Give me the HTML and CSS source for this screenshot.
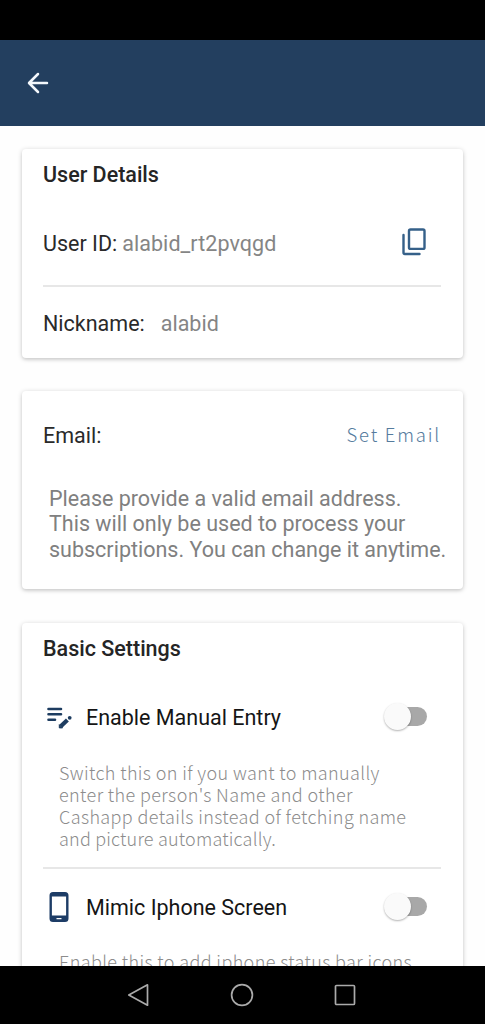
FILE: index.html
```html
<!DOCTYPE html>
<html lang="en">
<head>
<meta charset="utf-8">
<title>Settings</title>
<link rel="stylesheet" href="styles.css">
</head>
<body>
<div class="phone">
  <div class="status-bar"></div>
  <header class="app-bar">
    <svg class="back" viewBox="0 0 24 24"><path d="M21 12H3.500M12 3L3 12l9 9" fill="none" stroke="#f4f8fc" stroke-width="2.500" stroke-linecap="round" stroke-linejoin="round"/></svg>
  </header>
  <main class="content">
    <section class="card user-card">
      <h2 class="card-title">User Details</h2>
      <div class="row user-row">
        <span class="label">User ID:</span><span class="value user-id">alabid_rt2pvqgd</span>
        <svg class="copy" viewBox="0 0 26 28"><g fill="none" stroke="#356089" stroke-width="2.400" stroke-linecap="round" stroke-linejoin="round"><rect x="8" y="1.500" width="15.500" height="19.400" rx="1.500"/><path d="M2.500 7v17.500q0 1.500 1.500 1.500H18.500"/></g></svg>
      </div>
      <div class="divider"></div>
      <div class="row nick-row">
        <span class="label">Nickname:</span><span class="value nickname">alabid</span>
      </div>
    </section>
    <section class="card email-card">
      <div class="row email-row">
        <span class="label">Email:</span>
        <a class="set-email">Set Email</a>
      </div>
      <p class="email-note">Please provide a valid email address.<br>This will only be used to process your<br>subscriptions. You can change it anytime.</p>
    </section>
    <section class="card settings-card">
      <h2 class="card-title">Basic Settings</h2>
      <div class="row setting-row">
        <span class="icon-slot"><svg class="edit" viewBox="0 0 26 22"><g fill="none" stroke="#1d3c60" stroke-width="2.600" stroke-linecap="round"><path d="M2.500 2h12.500M2.500 7.200h12.500M2.500 12.700h6.500"/></g><path d="M14.800 19.200l6.600-6.300" fill="none" stroke="#1d3c60" stroke-width="4.200"/><path d="M13.300 17.700v3.200h3.200z" fill="#1d3c60" stroke="#1d3c60" stroke-width="1" stroke-linejoin="round"/><circle cx="23.700" cy="10.800" r="1.900" fill="#1d3c60"/></svg></span>
        <span class="setting-name">Enable Manual Entry</span>
        <span class="toggle"><span class="knob"></span></span>
      </div>
      <p class="help">Switch this on if you want to manually<br>enter the person's Name and other<br>Cashapp details instead of fetching name<br><span class="help-last">and picture automatically.</span></p>
      <div class="divider"></div>
      <div class="row phone-row">
        <span class="icon-slot"><svg class="device" viewBox="0 0 20 30"><path fill-rule="evenodd" d="M4 0h12q3.500 0 3.500 3.500v23q0 3.500-3.500 3.500H4Q.5 30 .5 26.500v-23Q.5 0 4 0zM2.900 4.500v19h14.200v-19zM7.500 26v1.200h5V26z" fill="#1d3c66"/></svg></span>
        <span class="setting-name">Mimic Iphone Screen</span>
        <span class="toggle"><span class="knob"></span></span>
      </div>
      <p class="help help-cut">Enable this to add iphone status bar icons</p>
    </section>
  </main>
  <nav class="nav-bar">
    <svg viewBox="0 0 24 24"><path d="M20.500 1.800v20.400L1.800 12z"/></svg>
    <svg viewBox="0 0 24 24"><circle cx="12" cy="12" r="10.400"/></svg>
    <svg viewBox="0 0 24 24"><rect x="2.500" y="2.500" width="19" height="19" rx="1"/></svg>
  </nav>
</div>
</body>
</html>
```
FILE: styles.css
```css
* { box-sizing: border-box; }
body { margin: 0; background: #fefefe; font-family: Roboto, "Liberation Sans", sans-serif; }
h2, p { margin: 0; }
svg { display: block; flex: none; }
.phone { width: 485px; height: 1024px; display: flex; flex-direction: column; overflow: hidden; }
.status-bar { height: 40px; background: #000; flex: none; }
.app-bar { height: 86px; flex: none; background: #233f5f; display: flex; align-items: center; padding-left: 26px; }
.back { width: 24px; height: 24px; }
.content { flex: 1; min-height: 0; overflow: hidden; padding: 23px 22px 0; display: flex; flex-direction: column; }
.card { flex: none; background: #fff; border-radius: 4px; padding: 0 22px 0 21px; box-shadow: 0 1px 5px rgba(0,0,0,.2), 0 2px 3px rgba(0,0,0,.06); }
.user-card { height: 209px; margin-bottom: 33px; }
.email-card { height: 198px; margin-bottom: 34px; }
.settings-card { height: 420px; }
.card-title { height: 50px; line-height: 52px; font-size: 21.5px; font-weight: 500; color: #252525; }
.row { display: flex; align-items: center; font-size: 21.5px; white-space: nowrap; }
.user-row { height: 86px; padding-top: 2px; }
.nick-row { height: 72px; }
.label { color: #2a2a2a; }
.value { color: #858585; }
.user-id { margin-left: 5px; letter-spacing: .05px; }
.nickname { margin-left: 16px; }
.copy { width: 26px; height: 28px; margin: 0 14px 2px auto; }
.divider { height: 2px; background: #e7e7e7; }
.email-row { height: 88px; justify-content: space-between; }
.set-email { font: 300 18.5px "Noto Sans CJK SC", "Open Sans", sans-serif; color: #557b9d; letter-spacing: 1.8px; padding-bottom: 2px; }
.email-note { padding: 6.500px 0 0 6px; font-size: 21.5px; line-height: 25.7px; color: #808080; white-space: nowrap; }
.setting-row { height: 88px; }
.phone-row { height: 78px; padding-bottom: 2px; }
.icon-slot { width: 43px; padding-left: 3px; flex: none; }
.edit { width: 26px; height: 22px; margin-top: 2px; }
.device { width: 20px; height: 30px; margin-left: 3px; }
.setting-name { color: #151515; }
.toggle { width: 37px; height: 19px; margin: 0 14px 1px auto; border-radius: 10px; background: #a8a8a8; position: relative; }
.knob { position: absolute; left: -6px; top: -4px; width: 27px; height: 27px; border-radius: 50%; background: #fafafa; box-shadow: 0 1px 2px rgba(0,0,0,.3); }
.help { height: 106px; padding-left: 16px; font: 300 18px/22px "Noto Sans CJK SC", "Open Sans", sans-serif; letter-spacing: .38px; color: #8c8c8c; white-space: nowrap; }
.help-last { letter-spacing: .2px; }
.help-cut { padding-top: 3px; }
.nav-bar { height: 58px; flex: none; background: #000; display: flex; align-items: center; justify-content: center; gap: 79px; padding-right: 1px; }
.nav-bar svg { width: 24px; height: 24px; fill: none; stroke: #aaa; stroke-width: 1.700; stroke-linejoin: round; }
```
